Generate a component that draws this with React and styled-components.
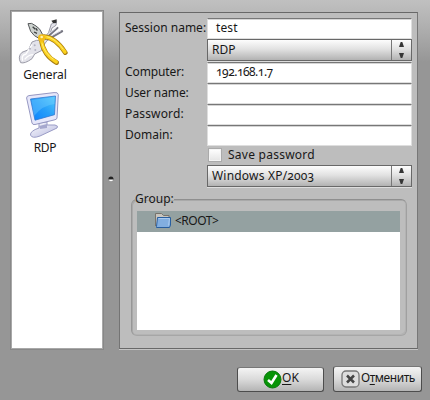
import React from "react";
import styled, { createGlobalStyle } from "styled-components";

const GlobalStyle = createGlobalStyle`
  * { box-sizing: border-box; }
  body { margin: 0; overflow: hidden; }
`;

const Dialog = styled.main`
  width: 430px;
  height: 400px;
  padding: 10px 8px 0 10px;
  background: linear-gradient(#c0c0c0 0, #b0b0b0 26px, #969696 62px);
  font: 12px/16px "Noto Sans", "Open Sans", sans-serif;
  font-variant-numeric: oldstyle-nums;
  color: #181818;
`;

const Body = styled.div`
  display: flex;
  height: 340px;
`;

const Sidebar = styled.nav`
  width: 94px;
  height: 340px;
  border: 1px solid #888;
  box-shadow: inset 0 0 0 1px #a8a8a8;
  background: #fff;
  padding: 7px 0 0 5px;
`;

const NavItem = styled.div`
  display: flex;
  flex-direction: column;
  align-items: center;
  width: 58px;
  height: 73px;
  svg { display: block; flex: none; margin: 0 4px 1px 0; }
`;

const Text = styled.span`
  white-space: pre;
  letter-spacing: ${(p) => p.$ls || 0}px;
`;

const Splitter = styled.div`
  width: 15px;
  padding: 165px 0 0 4px;
  svg { display: block; }
`;

const Panel = styled.section`
  width: 299px;
  height: 337px;
  margin-top: 2px;
  padding: 5px 5px 0 5px;
  border: 1px solid #686868;
  border-left-color: #747474;
  border-right-color: #777;
  background: #bdbdbd;
  box-shadow: 0 1px #c4c4c4;
`;

const Form = styled.div`
  display: grid;
  grid-template-columns: 82px 205px;
  grid-template-rows: 21px 23px 21px 21px 21px 21px 19px 22px;
`;

const Label = styled.label`
  grid-column: 1;
  padding-top: 2px;
  white-space: pre;
  letter-spacing: ${(p) => p.$ls || 0}px;
`;

const Field = styled.div`
  grid-column: 2;
  height: 21px;
  padding: 1px 8px 0;
  border: 1px solid #dedede;
  border-top: 1px solid #777;
  box-shadow: inset 0 1px #d5d5d5;
  background: #fff;
  white-space: pre;
  letter-spacing: ${(p) => p.$ls || 0}px;
`;

const Combo = styled.div`
  grid-column: 2;
  display: flex;
  justify-content: space-between;
  height: 22px;
  border: 1px solid #686868;
  background: linear-gradient(#fdfdfd, #e2e2e2 45%, #b2b2b2);
  box-shadow: 0 1px #ddd;
  padding-left: 4px;
  line-height: 19px;
`;

const Arrows = styled.div`
  width: 20px;
  border-left: 1px solid #777;
  svg { display: block; }
`;

const CheckRow = styled.div`
  grid-column: 2;
  display: flex;
  gap: 6px;
  padding: 2px 0 0 1px;
  line-height: 13px;
`;

const CheckBox = styled.span`
  width: 14px;
  height: 14px;
  border: 1px solid #aaa;
  background: linear-gradient(#fff, #e4e4e4);
  box-shadow: inset 0 0 0 1px #f4f4f4;
`;

const Group = styled.fieldset`
  width: 276px;
  height: 145px;
  margin: 4px 0 0 6px;
  padding: 0 0 0 5px;
  min-width: 0;
  border: 1px solid;
  border-color: #8f8f8f #a0a0a0 #a6a6a6 #979797;
  box-shadow: inset 1px 1px #a9a9a9, inset -1px -1px #b3b3b3;
  border-radius: 6px;
`;

const Legend = styled.legend`
  margin-left: -2px;
  padding: 0;
  line-height: 16px;
  letter-spacing: ${(p) => p.$ls || 0}px;
`;

const Tree = styled.div`
  width: 263px;
  height: 119px;
  margin: 4px 0 0 0;
  background: #fff;
`;

const TreeRow = styled.div`
  display: flex;
  height: 21px;
  padding-left: 18px;
  gap: 4px;
  background: #94a1a1;
  line-height: 19px;
  svg { display: block; margin-top: 1px; }
`;

const Actions = styled.footer`
  display: flex;
  align-items: flex-end;
  justify-content: flex-end;
  gap: 9px;
  padding-top: 16px;
`;

const Button = styled.button`
  display: flex;
  width: ${(p) => p.$w}px;
  height: ${(p) => p.$h}px;
  padding: ${(p) => p.$pad};
  border: 1px solid #4d4d4d;
  border-top-color: #777;
  border-radius: 3px;
  background: linear-gradient(#f4f4f4, #dadada 50%, #b4b4b4);
  font: inherit;
  color: inherit;
  line-height: 20px;
  svg { display: block; flex: none; margin-top: 1px; }
  u { text-underline-offset: 2px; text-decoration-thickness: 1px; }
`;

const ToolsIcon = () => (
  <svg width="50" height="48" viewBox="6 12 150 144" fill="none">
    <path d="M14 146Q4 128 18 115L38 107L48 84Q60 76 80 80L98 55L106 30L122 20L120 34L108 42L96 76L80 98L76 110L56 120L48 134Q26 150 14 146Z" fill="#e3e3ea" stroke="#9c9ca8" strokeWidth="3" />
    <path d="M20 140Q14 124 30 120L48 92M26 136Q38 122 52 122" stroke="#fff" strokeWidth="4" />
    <path d="M88 74L124 42M96 76L138 52" stroke="#777782" strokeWidth="7" strokeLinecap="round" />
    <path d="M86 71L122 40M95 72L135 50" stroke="#dedee8" strokeWidth="3" />
    <circle cx="42" cy="104" r="3" fill="#b2b2c0" /><circle cx="58" cy="108" r="3" fill="#b2b2c0" /><circle cx="56" cy="94" r="3" fill="#b2b2c0" />
    <path d="M106 20L122 16L121 27L112 28Z" fill="#333" />
    <path d="M36 29Q46 24 60 36Q72 42 80 62L72 75Q52 66 44 52Z" fill="#cdd2cf" stroke="#55585a" strokeWidth="3" />
    <path d="M50 38L58 46M60 43L64 50M54 54L63 58" stroke="#3c3f40" strokeWidth="4" />
    <path d="M84 68Q118 70 148 116" stroke="#a77d16" strokeWidth="14" strokeLinecap="round" />
    <path d="M76 78Q82 124 122 146" stroke="#a77d16" strokeWidth="14" strokeLinecap="round" />
    <path d="M84 68Q118 70 147 114M76 78Q82 122 121 144" stroke="#fcd21c" strokeWidth="10" strokeLinecap="round" />
    <path d="M92 68Q118 73 142 106M78 88Q86 118 112 136" stroke="#ffea75" strokeWidth="3" />
    <circle cx="77" cy="72" r="11" fill="#f3bd19" /><circle cx="77" cy="69" r="4" fill="#fff2b2" />
  </svg>
);

const MonitorIcon = () => (
  <svg width="34" height="48" viewBox="0 -1 34 48">
    <defs>
      <linearGradient id="screen" x1="0" y1="1" x2="1" y2="0">
        <stop stopColor="#087fff" /><stop offset=".5" stopColor="#269ef9" /><stop offset="1" stopColor="#52cafc" />
      </linearGradient>
      <linearGradient id="stand" x2="1" y2="1"><stop stopColor="#fff" /><stop offset="1" stopColor="#b6b8df" /></linearGradient>
    </defs>
    <path d="M4.5 43Q4 39 13 36L13 31L21 30L21 33L29 33Q33 34 31 36L14 44Q6 47 4.5 43Z" fill="url(#stand)" stroke="#9a9cc6" />
    <path d="M13 34L21 32L21 36L14 37Z" fill="#a6a8ce" />
    <path d="M.6 6Q.6 4 3 3.6L28 .6Q32 0 32.3 2.5L31 26Q31 27.5 28 28L9 32.5Q6.5 33 6 31Z" fill="#e6e7fa" stroke="#9698c2" />
    <path d="M4.5 7L29.5 4L28.5 22.7L9 28.2Z" fill="url(#screen)" stroke="#3478cf" strokeWidth=".8" />
    <path d="M5.5 8L28.5 5V12Q17 13 8 24Z" fill="#80d4ff" opacity=".35" />
  </svg>
);

const ComboArrows = () => (
  <Arrows>
    <svg width="19" height="20" viewBox="0 0 19 20" fill="#363636">
      <path d="M7 7H12L10.3 2H8.7ZM7 13H12L10.3 18H8.7Z" />
    </svg>
  </Arrows>
);

const FolderIcon = () => (
  <svg width="16" height="17" viewBox="0 0 16 17">
    <path d="M.5 14V1.5H6.5L8.5 3.5H14V6" fill="#c9c5be" stroke="#77736c" />
    <path d="M1.5 14.5L2.5 5.5H15.5V13L14.5 15.5H1.5Z" fill="#82aee0" stroke="#285e9f" />
    <path d="M3.5 6.5H14.5L13.5 13.5" fill="none" stroke="#a9c9ee" />
  </svg>
);

export default function App() {
  return (
    <Dialog>
      <GlobalStyle />
      <Body>
        <Sidebar>
          <NavItem><ToolsIcon /><Text $ls={-0.1}>General</Text></NavItem>
          <NavItem><MonitorIcon /><Text $ls={-0.3}>RDP</Text></NavItem>
        </Sidebar>
        <Splitter>
          <svg width="6" height="7" viewBox="0 0 6 7">
            <circle cx="3" cy="4" r="2.2" fill="#fff" /><path d="M.5 4.5A2.5 2.5 0 0 1 5.5 3.5V4.5Z" fill="#222" />
          </svg>
        </Splitter>
        <Panel>
          <Form>
            <Label $ls={0}>Session name:</Label><Field $ls={0.1}>test</Field>
            <Combo><Text>RDP</Text><ComboArrows /></Combo>
            <Label $ls={-0.1}>Computer:</Label><Field $ls={-0.5}>192.168.1.7</Field>
            <Label $ls={-0.1}>User name:</Label><Field />
            <Label $ls={0.15}>Password:</Label><Field />
            <Label $ls={0}>Domain:</Label><Field />
            <CheckRow><CheckBox /><Text $ls={0.25}>Save password</Text></CheckRow>
            <Combo><Text $ls={0.2}>Windows XP/2003</Text><ComboArrows /></Combo>
          </Form>
          <Group>
            <Legend>Group:</Legend>
            <Tree><TreeRow><FolderIcon /><Text $ls={-0.5}>&lt;ROOT&gt;</Text></TreeRow></Tree>
          </Group>
        </Panel>
      </Body>
      <Actions>
        <Button $w={87} $h={25} $pad="0 0 0 25px">
          <svg width="19" height="20" viewBox="0 0 19 20">
            <circle cx="9.5" cy="10.5" r="8.5" fill="#079407" stroke="#08750c" />
            <path d="M5 11L8.5 14L13.5 6" fill="none" stroke="#fff" strokeWidth="2.6" />
          </svg>
          <Text><u>O</u>K</Text>
        </Button>
        <Button $w={89} $h={26} $pad="1px 0 0 7px">
          <svg width="20" height="20" viewBox="0 0 20 20">
            <rect x="1" y="2" width="17" height="16" rx="4" fill="#ddd" stroke="#777" strokeWidth="1.3" />
            <path d="M6 6.5L13 13.5M13 6.5L6 13.5" stroke="#444" strokeWidth="2.5" />
          </svg>
          <Text $ls={-0.45}>О<u>т</u>менить</Text>
        </Button>
      </Actions>
    </Dialog>
  );
}
